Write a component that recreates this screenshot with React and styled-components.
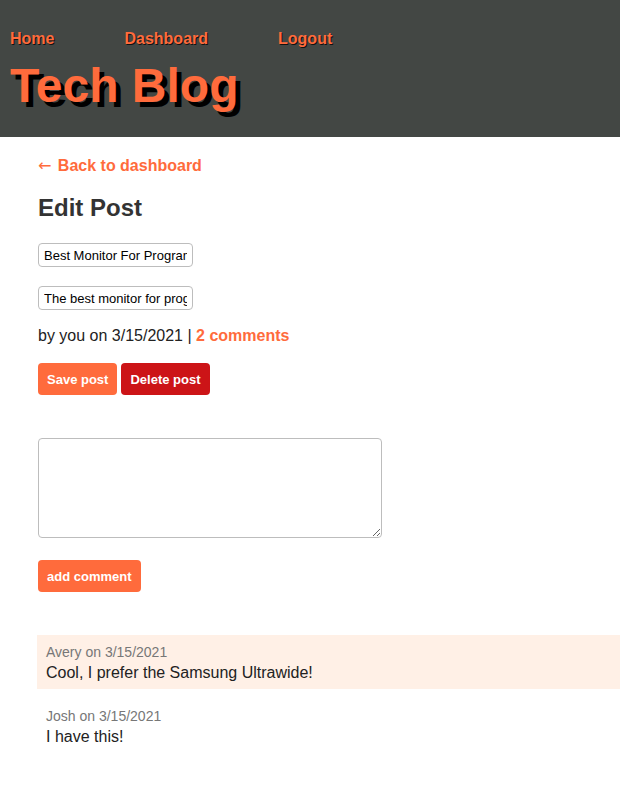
import React from "react";
import styled, { createGlobalStyle } from "styled-components";

const orange = "#ff6b3c";

const GlobalStyle = createGlobalStyle`
  body {
    margin: 0;
    background: #fff;
    font-family: "Liberation Sans", Arial, sans-serif;
    color: #222;
  }
`;

const Header = styled.header`
  background: #434744;
  padding: 30px 10px 24px;
`;

const Nav = styled.nav`
  display: flex;
  gap: 70px;
  margin-bottom: 11px;
  line-height: 18px;
`;

const NavLink = styled.a`
  color: ${orange};
  font-size: 16px;
  font-weight: bold;
  text-decoration: none;
  text-shadow: 1px 1px 0 #111;
`;

const Title = styled.h1`
  margin: 0;
  color: ${orange};
  font-size: 48px;
  font-weight: bold;
  line-height: 54px;
  text-shadow: 5px 5px 0 #000;
`;

const Main = styled.main`
  padding: 20px 0 40px 38px;
`;

const BackLink = styled.a`
  display: block;
  color: ${orange};
  font-size: 16px;
  font-weight: bold;
  text-decoration: none;
  line-height: 18px;
`;

const Arrow = styled.span`
  margin-right: 2px;
  font-family: "DejaVu Sans", sans-serif;
  font-weight: normal;
`;

const Heading = styled.h2`
  margin: 19px 0 21px;
  color: #333;
  font-size: 24px;
  line-height: 28px;
`;

const Field = styled.input`
  display: block;
  box-sizing: border-box;
  width: 155px;
  height: 24px;
  margin-bottom: ${(p) => p.$gap || 0}px;
  padding: 0 5px;
  border: 1px solid #bdbdbd;
  border-radius: 4px;
  font-family: "Liberation Sans", Arial, sans-serif;
  font-size: 13px;
  color: #000;
`;

const Byline = styled.p`
  margin: 17px 0 18px;
  font-size: 16px;
  line-height: 18px;
  color: #222;
`;

const CountLink = styled.a`
  color: ${orange};
  font-weight: bold;
  text-decoration: none;
`;

const Actions = styled.div`
  display: flex;
  gap: 4px;
`;

const Button = styled.button`
  height: 32px;
  padding: 0 9px;
  border: none;
  border-radius: 4px;
  background: ${(p) => (p.$danger ? "#cc1417" : orange)};
  color: #fff;
  font-family: "Liberation Sans", Arial, sans-serif;
  font-size: 13px;
  font-weight: bold;
  cursor: pointer;
`;

const CommentForm = styled.form`
  display: flex;
  flex-direction: column;
  align-items: flex-start;
  gap: 22px;
  margin: 43px 0 43px;
`;

const TextArea = styled.textarea`
  box-sizing: border-box;
  width: 344px;
  height: 100px;
  border: 1px solid #bdbdbd;
  border-radius: 4px;
  font-family: "Liberation Sans", Arial, sans-serif;
  font-size: 13px;
`;

const CommentList = styled.section`
  display: flex;
  flex-direction: column;
  gap: 10px;
  margin-left: -1px;
`;

const Comment = styled.div`
  padding: 8px 9px 6px;
  background: ${(p) => (p.$shaded ? "#fff0e6" : "transparent")};
`;

const Meta = styled.div`
  color: #777;
  font-size: 14px;
  line-height: 18px;
`;

const Body = styled.div`
  margin-top: 2px;
  color: #222;
  font-size: 16px;
  line-height: 20px;
`;

const comments = [
  { user: "Avery", date: "3/15/2021", text: "Cool, I prefer the Samsung Ultrawide!" },
  { user: "Josh", date: "3/15/2021", text: "I have this!" },
];

const App = () => {
  return (
    <React.Fragment>
      <GlobalStyle />
      <Header>
        <Nav>
          <NavLink href="#">Home</NavLink>
          <NavLink href="#">Dashboard</NavLink>
          <NavLink href="#">Logout</NavLink>
        </Nav>
        <Title>Tech Blog</Title>
      </Header>
      <Main>
        <BackLink href="#">
          <Arrow>←</Arrow> Back to dashboard
        </BackLink>
        <Heading>Edit Post</Heading>
        <Field $gap={19} defaultValue="Best Monitor For Programming" />
        <Field defaultValue="The best monitor for programming is a big one!" />
        <Byline>
          by you on 3/15/2021 | <CountLink href="#">2 comments</CountLink>
        </Byline>
        <Actions>
          <Button type="button">Save post</Button>
          <Button type="button" $danger>
            Delete post
          </Button>
        </Actions>
        <CommentForm onSubmit={(e) => e.preventDefault()}>
          <TextArea />
          <Button type="submit">add comment</Button>
        </CommentForm>
        <CommentList>
          {comments.map((c, i) => (
            <Comment key={c.user} $shaded={i % 2 === 0}>
              <Meta>
                {c.user} on {c.date}
              </Meta>
              <Body>{c.text}</Body>
            </Comment>
          ))}
        </CommentList>
      </Main>
    </React.Fragment>
  );
};

export default App;
